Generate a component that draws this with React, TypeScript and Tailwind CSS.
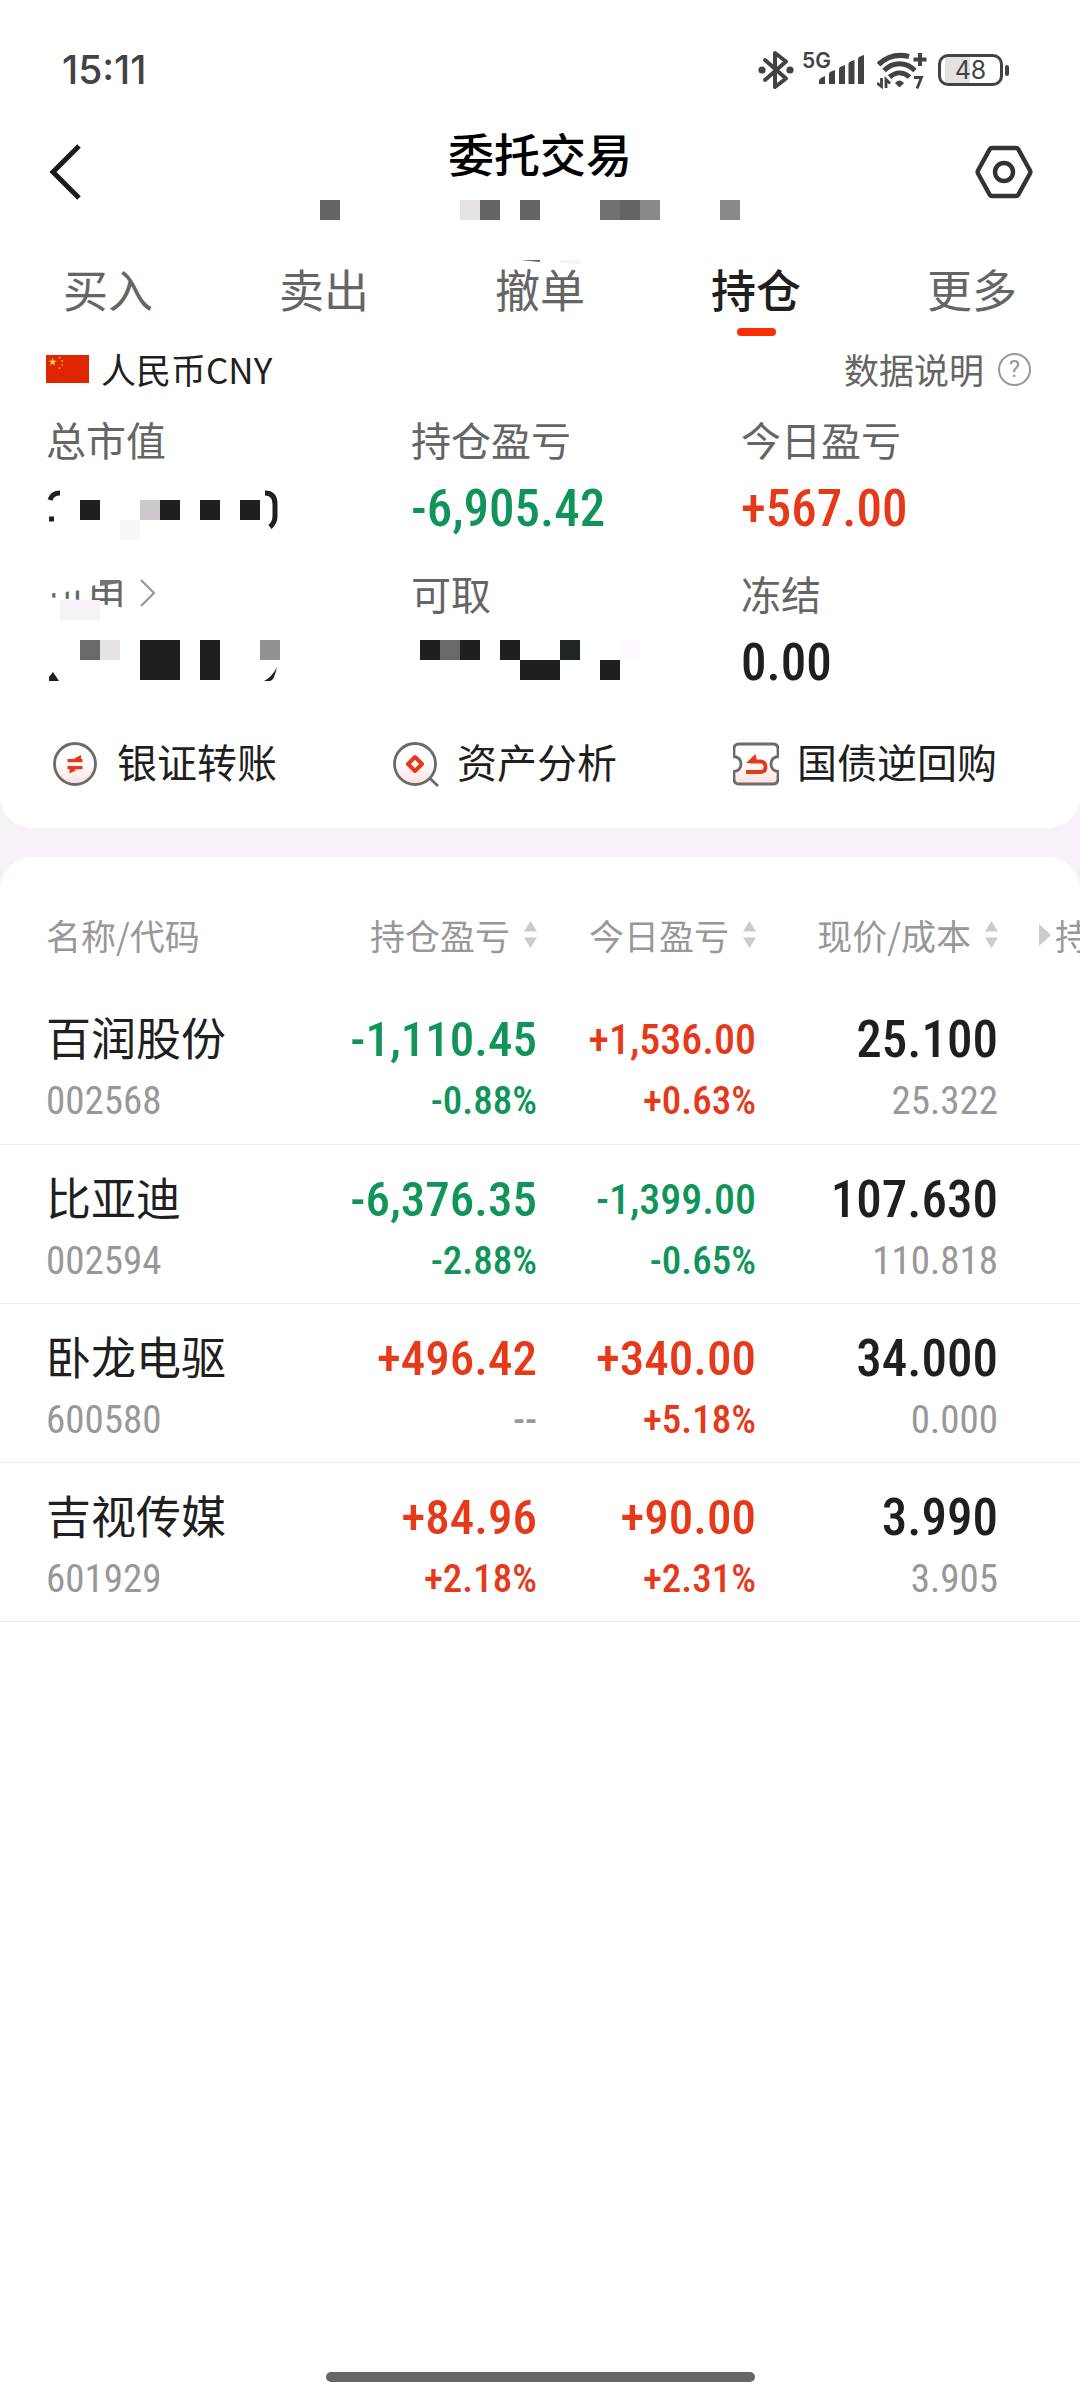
import React, { useState } from "react";

type Cell = [x: number, y: number, w: number, h: number, color: string];

interface Holding {
  name: string;
  code: string;
  pnl: string;
  pnlRate: string;
  today: string;
  todayRate: string;
  price: string;
  cost: string;
}

const tabs = ["买入", "卖出", "撤单", "持仓", "更多"];

const holdings: Holding[] = [
  {
    name: "百润股份",
    code: "002568",
    pnl: "-1,110.45",
    pnlRate: "-0.88%",
    today: "+1,536.00",
    todayRate: "+0.63%",
    price: "25.100",
    cost: "25.322",
  },
  {
    name: "比亚迪",
    code: "002594",
    pnl: "-6,376.35",
    pnlRate: "-2.88%",
    today: "-1,399.00",
    todayRate: "-0.65%",
    price: "107.630",
    cost: "110.818",
  },
  {
    name: "卧龙电驱",
    code: "600580",
    pnl: "+496.42",
    pnlRate: "--",
    today: "+340.00",
    todayRate: "+5.18%",
    price: "34.000",
    cost: "0.000",
  },
  {
    name: "吉视传媒",
    code: "601929",
    pnl: "+84.96",
    pnlRate: "+2.18%",
    today: "+90.00",
    todayRate: "+2.31%",
    price: "3.990",
    cost: "3.905",
  },
];

// Mosaic blocks that hide the private values
const accountCells: Cell[] = [
  [0, 0, 20, 20, "#636562"],
  [140, 0, 20, 20, "#e7e2e6"],
  [160, 0, 20, 20, "#636562"],
  [200, 0, 20, 20, "#636562"],
  [280, 0, 20, 20, "#737074"],
  [300, 0, 20, 20, "#636562"],
  [320, 0, 20, 20, "#8b888b"],
  [400, 0, 20, 20, "#8b888b"],
];

const marketCells: Cell[] = [
  [34, 15, 20, 20, "#1f1f1f"],
  [94, 15, 20, 20, "#cdc8cd"],
  [114, 15, 20, 20, "#1f1f1f"],
  [154, 15, 20, 20, "#1f1f1f"],
  [194, 15, 20, 20, "#1f1f1f"],
  [74, 35, 20, 20, "#f7f7f7"],
];

const usableCells: Cell[] = [
  [34, 1, 20, 20, "#6b686b"],
  [54, 1, 20, 20, "#e7e2e6"],
  [94, 1, 40, 40, "#1f1f1f"],
  [154, 1, 20, 40, "#1f1f1f"],
  [214, 1, 20, 20, "#949194"],
];

const cashCells: Cell[] = [
  [9, 1, 20, 20, "#1f1f1f"],
  [29, 1, 20, 20, "#6b686b"],
  [49, 1, 20, 20, "#1f1f1f"],
  [89, 1, 20, 20, "#1f1f1f"],
  [109, 21, 40, 20, "#1f1f1f"],
  [149, 1, 20, 20, "#1f2521"],
  [189, 21, 20, 20, "#1f1f1f"],
  [209, 1, 20, 20, "#fdf8fd"],
];

const tone = (value: string) => {
  if (value.startsWith("+")) return "text-[#e5391a]";
  if (value === "--") return "text-[#999799]";
  return "text-[#109459]";
};

const Mosaic: React.FC<{
  cells: Cell[];
  width: number;
  height: number;
  children?: React.ReactNode;
}> = ({ cells, width, height, children }) => (
  <svg
    width={width}
    height={height}
    viewBox={`0 0 ${width} ${height}`}
    shapeRendering="crispEdges"
    aria-hidden="true"
    className="block overflow-visible"
  >
    {cells.map(([x, y, w, h, color]) => (
      <rect key={`${x}-${y}`} x={x} y={y} width={w} height={h} fill={color} />
    ))}
    <g shapeRendering="auto">{children}</g>
  </svg>
);

const BluetoothIcon = () => (
  <svg width="36" height="40" viewBox="0 0 36 40" fill="none" stroke="#434343">
    <path
      d="M7 10 28 28.500 17 37V3L28 11.500 7 30"
      strokeWidth="4"
      strokeLinejoin="round"
      strokeLinecap="round"
    />
    <circle cx="4" cy="20" r="3.600" fill="#434343" stroke="none" />
    <circle cx="32" cy="20" r="3.600" fill="#434343" stroke="none" />
  </svg>
);

const SignalIcon = () => (
  <svg width="46" height="30" viewBox="0 0 46 30" fill="#434343">
    <path d="M0 29v-3q0-2 2-3l4-2v8z" />
    <path d="M10 29V19q0-2 2-2.500l4-1.500v14z" />
    <path d="M20 29V14q0-2 2-2.500l4-1.500v19z" />
    <path d="M29.500 29V9q0-2 2-2.500l4-1.500v24z" />
    <path d="M39 29V4q0-2 2-2.500L45 0v29z" />
  </svg>
);

const WifiIcon = () => (
  <svg width="50" height="38" viewBox="0 0 50 38" fill="none" stroke="#434343">
    <path d="M1.500 13.500C10 5.500 20 2.500 32 5.500" strokeWidth="5.200" />
    <path d="M7 19.500c9-9 22-9 31 0" strokeWidth="5" />
    <path d="M12.500 26c6.500-5.500 14-5.500 20 0" strokeWidth="5" />
    <path d="m22.500 36-4-4q4-4 8 0z" fill="#434343" strokeWidth="1" />
    <path d="M43 2v13M36.500 8.500h13" strokeWidth="4" />
    <path d="M37 26.500h7.500L40 37.500" strokeWidth="2.800" />
    <path d="M4.500 27v8.500L0 32M9 37v-8.500l4 4" strokeWidth="2.800" />
  </svg>
);

const SortIcon = () => (
  <svg width="13" height="27" viewBox="0 0 13 27" fill="#cccccc">
    <path d="M6.500 0 13 10.500H0z" />
    <path d="M0 16.500h13L6.500 27z" />
  </svg>
);

const FlagIcon = () => (
  <svg width="43" height="28" viewBox="0 0 43 28">
    <path fill="#de2700" d="M0 0h43v28H0z" />
    <path
      fill="#ffde32"
      d="m6.700 3 1 2.800h3L8.300 7.600l.9 3-2.500-1.800-2.500 1.800.9-3L2.700 5.800h3z"
    />
    <g fill="#f5a01e">
      <circle cx="13.500" cy="2.800" r="1" />
      <circle cx="16.200" cy="6" r="1" />
      <circle cx="16.200" cy="10" r="1" />
      <circle cx="13.500" cy="13" r="1" />
    </g>
  </svg>
);

const PinkFade: React.FC<{ id: string }> = ({ id }) => (
  <defs>
    <linearGradient id={id} x1="0" y1="0" x2="0" y2="1">
      <stop offset="0.45" stopColor="#ffffff" />
      <stop offset="1" stopColor="#fde0de" />
    </linearGradient>
  </defs>
);

const TransferIcon = () => (
  <svg width="46" height="46" viewBox="0 0 46 46" fill="none">
    <PinkFade id="transfer" />
    <circle cx="22" cy="23" r="20.500" fill="url(#transfer)" stroke="#6b6b6b" strokeWidth="2.800" />
    <path d="M14.500 19.700h15M14.500 26.700h15" stroke="#e5391a" strokeWidth="3.200" />
    <path d="m21 17.500 7-3.500v6zM23.500 29l-7 3.500v-6z" fill="#e5391a" />
  </svg>
);

const AnalysisIcon = () => (
  <svg width="46" height="46" viewBox="0 0 46 46" fill="none">
    <PinkFade id="analysis" />
    <circle cx="22" cy="23" r="20.500" fill="url(#analysis)" stroke="#6b6b6b" strokeWidth="2.800" />
    <path d="m37 37.500 8 7.500" stroke="#6b6b6b" strokeWidth="2.800" />
    <path d="m22 16 7 7-7 7-7-7z" stroke="#e5391a" strokeWidth="4" strokeLinejoin="round" />
  </svg>
);

const RepoIcon = () => (
  <svg width="46" height="46" viewBox="0 0 46 46" fill="none">
    <PinkFade id="repo" />
    <path
      d="M6 3h34q5 0 5 5v7.500q-7 1-7 7.500t7 7.500V38q0 5-5 5H6q-5 0-5-5v-7.500q7-1 7-7.500t-7-7.500V8q0-5 5-5z"
      fill="url(#repo)"
      stroke="#6b6b6b"
      strokeWidth="2.800"
    />
    <path d="M13 31h14.500q5 0 5-5t-5-5.500H17" stroke="#e5391a" strokeWidth="3.800" />
    <path d="m22.500 13 2 9H13z" fill="#e5391a" />
  </svg>
);

const Amount: React.FC<{ value: string; compact?: boolean }> = ({ value, compact }) => (
  <div className={`${compact ? "text-[42px]" : "text-[49px]"} leading-[50px] font-medium ${tone(value)}`}>
    {value}
  </div>
);

const Rate: React.FC<{ value: string }> = ({ value }) => (
  <div className={`mt-[16px] text-[39px] leading-[40px] font-medium ${tone(value)}`}>{value}</div>
);

const SortHeader: React.FC<{ label: string }> = ({ label }) => (
  <th scope="col" className="pt-[27px] font-normal">
    <button type="button" className="ml-auto flex items-center gap-[14px] whitespace-nowrap">
      {label}
      <SortIcon />
    </button>
  </th>
);

const labelClass = "text-[40px] leading-[40px] text-[#656565]";
const valueClass = "mt-[26px] h-[48px] font-[Roboto_Condensed,Roboto,sans-serif] text-[51px] leading-[48px] font-medium";

export default function App() {
  const [activeTab, setActiveTab] = useState("持仓");

  return (
    <div className="flex min-h-screen flex-col bg-[#f6f2f7] font-['Noto_Sans_CJK_SC',sans-serif] text-[#1f1f1f]">
      <section className="rounded-b-[32px] bg-white pb-[41px]">
        {/* Status bar */}
        <div className="flex h-[128px] items-center justify-between pt-[12px] pr-[71px] pl-[62px] font-[Inter,sans-serif] text-[#434343]">
          <span className="text-[39px] leading-[48px] font-medium">15:11</span>
          <div className="flex items-center">
            <BluetoothIcon />
            <span className="ml-[8px] self-start text-[21px] leading-[22px] font-semibold">5G</span>
            <span className="-ml-[12px]">
              <SignalIcon />
            </span>
            <span className="ml-[12px]">
              <WifiIcon />
            </span>
            <span className="ml-[11px] flex h-[32px] w-[65px] items-center justify-center rounded-[10px] border-[3px] border-[#434343] bg-[linear-gradient(to_right,#ffffff_4px,#e2e2e2_4px,#e2e2e2_29px,#ffffff_29px)] text-[25px] leading-[26px]">
              48
            </span>
            <span className="ml-[2px] h-[11px] w-[4px] rounded-[2px] bg-[#434343]" />
          </div>
        </div>

        {/* Title bar */}
        <header className="grid grid-cols-[1fr_auto_1fr] items-start">
          <button type="button" aria-label="返回" className="flex h-[88px] items-center pl-[48px]">
            <svg width="34" height="56" viewBox="0 0 34 56" fill="none">
              <path d="M31 2 5 28l26 26" stroke="#1a1a1a" strokeWidth="5" />
            </svg>
          </button>
          <div className="flex flex-col items-center">
            <h1 className="text-[46px] leading-[48px] font-medium text-black">委托交易</h1>
            <div className="mt-[24px]">
              <Mosaic cells={accountCells} width={440} height={20} />
            </div>
          </div>
          <button type="button" aria-label="设置" className="flex h-[88px] items-center justify-end pr-[47px]">
            <svg width="58" height="54" viewBox="0 0 58 54" fill="none" stroke="#333333" strokeWidth="4.400">
              <path d="M17 3h24q1.500 0 2.200 1.200L55 25.500q.8 1.500 0 3L43.200 49.800Q42.500 51 41 51H17q-1.500 0-2.200-1.200L3 28.500q-.8-1.500 0-3L14.800 4.200Q15.500 3 17 3z" />
              <circle cx="29" cy="27" r="9" />
            </svg>
          </button>
        </header>

        <nav className="mt-[39px] grid grid-cols-5">
          {tabs.map((tab) => (
            <button
              key={tab}
              type="button"
              onClick={() => setActiveTab(tab)}
              className="relative flex flex-col items-center text-[45px] leading-[60px]"
            >
              <span className={activeTab === tab ? "font-medium" : "text-[#656565]"}>{tab}</span>
              <span
                className={`mt-[9px] h-[8px] w-[39px] rounded-full ${
                  activeTab === tab ? "bg-[#fb2d05]" : "bg-transparent"
                }`}
              />
              {tab === "撤单" && (
                <svg
                  width="60"
                  height="4"
                  viewBox="0 0 60 4"
                  aria-hidden="true"
                  className="absolute top-px left-[88px]"
                >
                  <path d="M0 0h20v2z" fill="#656565" />
                  <path d="M40 0h20v4l-20-1z" fill="#f6f2f7" />
                </svg>
              )}
            </button>
          ))}
        </nav>

        <div className="mt-[13px] flex items-center justify-between px-[46px] text-[35px] leading-[40px]">
          <div className="flex items-center gap-[12px]">
            <FlagIcon />
            <span>人民币CNY</span>
          </div>
          <button type="button" className="flex items-center gap-[14px] pr-[3px] text-[#656565]">
            数据说明
            <span className="flex size-[33px] items-center justify-center rounded-full border-2 border-[#999799] font-[Roboto,sans-serif] text-[24px] leading-[24px] text-[#999799]">
              ?
            </span>
          </button>
        </div>

        {/* Account summary */}
        <div className="mt-[30px] grid grid-cols-[365fr_330fr_293fr] gap-y-[40px] px-[46px]">
          <div>
            <div className={labelClass}>总市值</div>
            <div className={valueClass}>
              <Mosaic cells={marketCells} width={240} height={48}>
                <g fill="none" stroke="#1f1f1f" strokeWidth="5">
                  <path d="M14 8Q6 8 4 15M3 34h5" />
                  <path d="M219 8q10 0 10 11v12q0 7-5 11" />
                </g>
              </Mosaic>
            </div>
          </div>
          <div>
            <div className={labelClass}>持仓盈亏</div>
            <div className={`${valueClass} text-[#109459]`}>-6,905.42</div>
          </div>
          <div>
            <div className={labelClass}>今日盈亏</div>
            <div className={`${valueClass} text-[#e5391a]`}>+567.00</div>
          </div>
          <div>
            <button type="button" className={`relative flex items-center ${labelClass}`}>
              可用
              <svg
                width="90"
                height="50"
                viewBox="0 0 90 50"
                aria-hidden="true"
                className="absolute top-0 left-0"
              >
                <path d="M0-5h80V7L54 11l-8 2v3L0 21zM0 24l46 4 8 3 26 4v17H0z" fill="#ffffff" />
                <path d="M54 7h20v3l-20 3z" fill="#737373" />
                <path d="M14 27h40v20H14z" fill="#f6f2f7" />
              </svg>
              <svg width="16" height="28" viewBox="0 0 16 28" fill="none" className="ml-[14px]">
                <path d="m1 1 13 13L1 27" stroke="#999799" strokeWidth="2.200" />
              </svg>
            </button>
            <div className={valueClass}>
              <Mosaic cells={usableCells} width={240} height={48}>
                <path d="m3 38 4-5 6 9H3zM218 42q8-4 13-14-3 14-7 14z" fill="#1f1f1f" />
              </Mosaic>
            </div>
          </div>
          <div>
            <div className={labelClass}>可取</div>
            <div className={valueClass}>
              <Mosaic cells={cashCells} width={240} height={48} />
            </div>
          </div>
          <div>
            <div className={labelClass}>冻结</div>
            <div className={valueClass}>0.00</div>
          </div>
        </div>

        <div className="mt-[54px] grid grid-cols-3 pr-[7px] pl-[53px] text-[40px] leading-[40px]">
          <button type="button" className="flex items-start gap-[18px]">
            <TransferIcon />
            银证转账
          </button>
          <button type="button" className="flex items-start gap-[18px]">
            <AnalysisIcon />
            资产分析
          </button>
          <button type="button" className="flex items-start gap-[18px]">
            <RepoIcon />
            国债逆回购
          </button>
        </div>
      </section>

      {/* Holdings */}
      <section className="mt-[29px] flex flex-1 flex-col overflow-hidden rounded-t-[32px] bg-white">
        <table className="w-full table-fixed border-collapse text-right">
          <colgroup>
            <col />
            <col className="w-[219px]" />
            <col className="w-[219px]" />
            <col className="w-[242px]" />
            <col className="w-[82px]" />
          </colgroup>
          <thead>
            <tr className="h-[128px] text-[35px] leading-[40px] text-[#999799]">
              <th scope="col" className="pt-[27px] pl-[46px] text-left font-normal">
                名称/代码
              </th>
              <SortHeader label="持仓盈亏" />
              <SortHeader label="今日盈亏" />
              <SortHeader label="现价/成本" />
              <th scope="col" className="pt-[27px] pl-[41px] font-normal">
                <div className="flex items-center gap-[4px] whitespace-nowrap">
                  <svg width="12" height="22" viewBox="0 0 12 22" fill="#cccccc" className="shrink-0">
                    <path d="m0 0 12 11L0 22z" />
                  </svg>
                  持
                </div>
              </th>
            </tr>
          </thead>
          <tbody className="font-[Roboto_Condensed,Roboto,sans-serif]">
            {holdings.map((item) => (
              <tr key={item.code} className="h-[159px] border-b border-[#ebebeb] align-top">
                <td className="pt-[29px] pl-[46px] text-left whitespace-nowrap">
                  <div className="font-['Noto_Sans_CJK_SC',sans-serif] text-[45px] leading-[46px]">
                    {item.name}
                  </div>
                  <div className="mt-[21px] text-[39px] leading-[40px] text-[#999799]">{item.code}</div>
                </td>
                <td className="pt-[30px]">
                  <Amount value={item.pnl} />
                  <Rate value={item.pnlRate} />
                </td>
                <td className="pt-[30px]">
                  <Amount value={item.today} compact={item.today.length > 8} />
                  <Rate value={item.todayRate} />
                </td>
                <td className="pt-[30px]">
                  <div className="text-[51px] leading-[50px] font-medium">{item.price}</div>
                  <div className="mt-[16px] text-[39px] leading-[40px] text-[#999799]">{item.cost}</div>
                </td>
                <td />
              </tr>
            ))}
          </tbody>
        </table>
        <div className="mx-auto mt-auto mb-[18px] h-[10px] w-[429px] rounded-full bg-[#666666]" />
      </section>
    </div>
  );
}
